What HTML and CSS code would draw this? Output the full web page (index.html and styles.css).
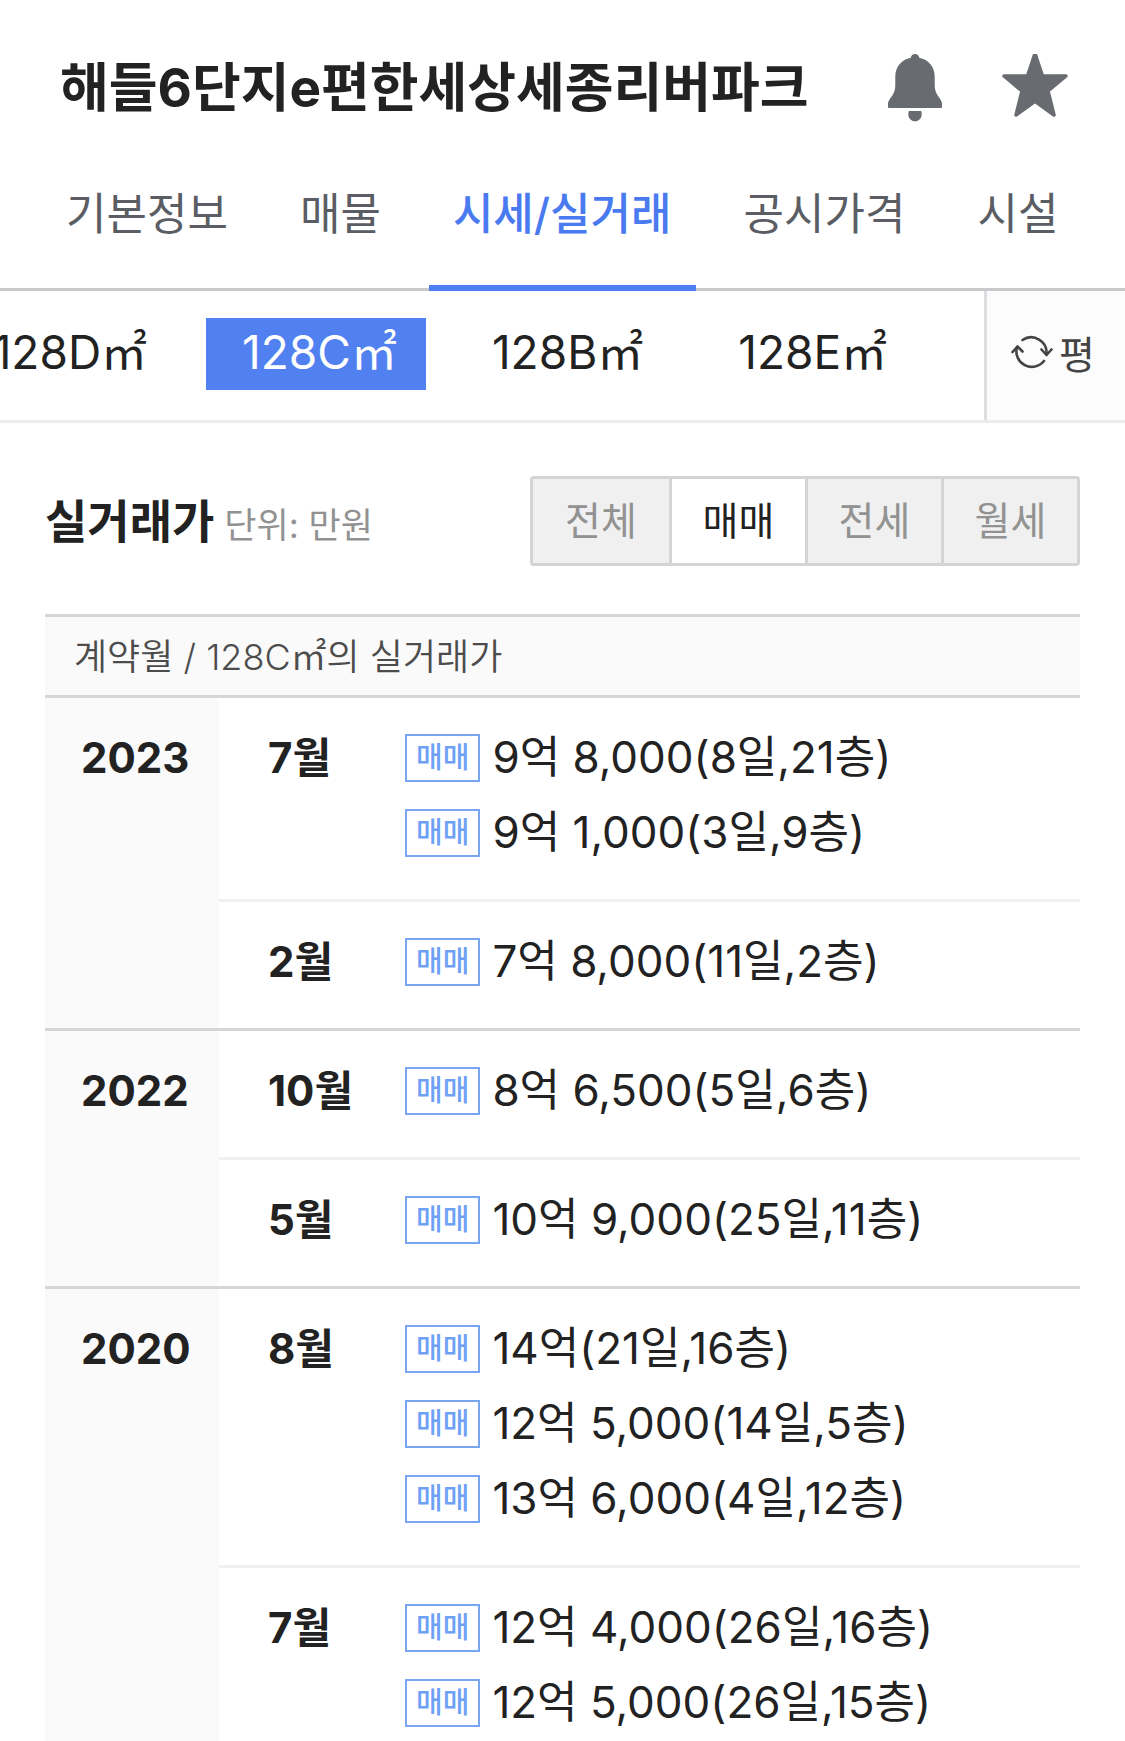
FILE: index.html
```html
<!DOCTYPE html>
<html lang="ko">
<head>
<meta charset="utf-8">
<meta name="viewport" content="width=device-width, initial-scale=1">
<title>해들6단지e편한세상세종리버파크</title>
<link rel="stylesheet" href="styles.css">
</head>
<body>
<div class="app">
  <header class="header">
    <h1 class="header-title">해들6단지e편한세상세종리버파크</h1>
    <button class="icon-button" type="button" aria-label="알림">
      <svg width="54" height="68" viewBox="0 0 54 68" fill="currentColor" aria-hidden="true">
        <path d="M27 0c-2.300 0-3.900 1.500-4.200 3.700C13.500 5.500 7.300 12.800 7.300 22.500V31c0 4.200-.8 7.300-3 10.500l-2.300 3.300C.7 46.800 0 48.300 0 50v2.800C0 53.600.5 54 1.200 54h51.600c.7 0 1.200-.4 1.200-1.200V50c0-1.700-.7-3.200-2-5.200l-2.300-3.300c-2.200-3.200-3-6.300-3-10.500v-8.500c0-9.700-6.200-17-15.500-18.800C30.900 1.500 29.300 0 27 0z"/>
        <path d="M20.800 57h12.400c.3.900.5 1.900.5 3 0 4.200-2.800 7.300-6.700 7.300s-6.700-3.100-6.700-7.300c0-1.100.2-2.100.5-3z"/>
      </svg>
    </button>
    <button class="icon-button" type="button" aria-label="관심 단지">
      <svg width="66" height="68" viewBox="0 4 66 68" aria-hidden="true">
        <path d="M33 3.500L40.500 26H64L46 41 52 65 33 51.300 14 65 20 41 2 26h23.500z" fill="currentColor" stroke="currentColor" stroke-width="3.500" stroke-linejoin="round"/>
      </svg>
    </button>
  </header>

  <nav class="tabs" aria-label="단지 메뉴">
    <a class="tab" href="#info">기본정보</a>
    <a class="tab" href="#articles">매물</a>
    <a class="tab tab-active" href="#price" aria-current="page">시세/실거래</a>
    <a class="tab" href="#official">공시가격</a>
    <a class="tab" href="#facility">시설</a>
  </nav>

  <div class="areas">
    <div class="area-list">
      <button class="area" type="button">128D㎡</button>
      <button class="area area-active" type="button" aria-pressed="true">128C㎡</button>
      <button class="area" type="button">128B㎡</button>
      <button class="area" type="button">128E㎡</button>
    </div>
    <button class="unit-button" type="button">
      <svg width="42" height="36" viewBox="0 0 42 36" fill="none" stroke="currentColor" stroke-width="2.600" stroke-linecap="round" stroke-linejoin="round" aria-hidden="true">
        <path d="M11.500 6A15.500 15.500 0 0 1 35.500 20.500"/>
        <path d="M30.500 15.500l5 5.500 5-5.500"/>
        <path d="M33 27A15.500 15.500 0 0 1 6 13"/>
        <path d="M1.500 18l5-5.500 5 5"/>
      </svg>
      평
    </button>
  </div>

  <main class="deals" id="price">
    <div class="deals-head">
      <h2 class="deals-title">실거래가</h2>
      <span class="deals-unit">단위: 만원</span>
      <div class="segment" role="group" aria-label="거래 유형">
        <button class="segment-item" type="button">전체</button>
        <button class="segment-item segment-active" type="button" aria-pressed="true">매매</button>
        <button class="segment-item" type="button">전세</button>
        <button class="segment-item" type="button">월세</button>
      </div>
    </div>

    <table class="table">
      <colgroup><col class="col-year"><col class="col-month"><col></colgroup>
      <thead>
        <tr><th class="table-caption" colspan="3" scope="colgroup">계약월 / 128C㎡의 실거래가</th></tr>
      </thead>
      <tbody>
        <tr class="year-start">
          <th class="year" rowspan="2" scope="rowgroup">2023</th>
          <th class="month" scope="row">7월</th>
          <td class="prices">
            <div class="deal"><span class="badge">매매</span>9억 8,000(8일,21층)</div>
            <div class="deal"><span class="badge">매매</span>9억 1,000(3일,9층)</div>
          </td>
        </tr>
        <tr>
          <th class="month" scope="row">2월</th>
          <td class="prices">
            <div class="deal"><span class="badge">매매</span>7억 8,000(11일,2층)</div>
          </td>
        </tr>
      </tbody>
      <tbody>
        <tr class="year-start">
          <th class="year" rowspan="2" scope="rowgroup">2022</th>
          <th class="month" scope="row">10월</th>
          <td class="prices">
            <div class="deal"><span class="badge">매매</span>8억 6,500(5일,6층)</div>
          </td>
        </tr>
        <tr>
          <th class="month" scope="row">5월</th>
          <td class="prices">
            <div class="deal"><span class="badge">매매</span>10억 9,000(25일,11층)</div>
          </td>
        </tr>
      </tbody>
      <tbody>
        <tr class="year-start">
          <th class="year" rowspan="2" scope="rowgroup">2020</th>
          <th class="month" scope="row">8월</th>
          <td class="prices">
            <div class="deal"><span class="badge">매매</span>14억(21일,16층)</div>
            <div class="deal"><span class="badge">매매</span>12억 5,000(14일,5층)</div>
            <div class="deal"><span class="badge">매매</span>13억 6,000(4일,12층)</div>
          </td>
        </tr>
        <tr>
          <th class="month" scope="row">7월</th>
          <td class="prices">
            <div class="deal"><span class="badge">매매</span>12억 4,000(26일,16층)</div>
            <div class="deal"><span class="badge">매매</span>12억 5,000(26일,15층)</div>
          </td>
        </tr>
      </tbody>
    </table>
  </main>
</div>
</body>
</html>
```

FILE: styles.css
```css
* {
  box-sizing: border-box;
}

body {
  margin: 0;
  background: #fff;
  color: #222;
  font-family: Inter, "Noto Sans CJK KR", sans-serif;
}

button {
  margin: 0;
  padding: 0;
  border: 0;
  background: none;
  color: inherit;
  font: inherit;
  cursor: pointer;
}

.app {
  height: 100vh;
  overflow: hidden;
}

/* Header */
.header {
  display: flex;
  align-items: center;
  padding: 46px 57px 0 60px;
}

.header-title {
  flex: 1;
  margin: 0;
  font-size: 53px;
  font-weight: 700;
  line-height: 84px;
  white-space: nowrap;
}

.icon-button {
  display: flex;
  margin-left: 60px;
  color: #686b70;
}

/* Tabs */
.tabs {
  display: flex;
  gap: 24px;
  padding: 0 42px;
  box-shadow: inset 0 -3px #cacace;
}

.tab {
  padding: 49px 24px 36px;
  border-bottom: 6px solid transparent;
  color: #5a5d63;
  font-size: 44px;
  line-height: 70px;
  text-decoration: none;
  white-space: nowrap;
}

.tab-active {
  border-color: #4f7ff0;
  color: #4a7af0;
  font-weight: 500;
}

/* Area filter */
.areas {
  display: flex;
  border-bottom: 3px solid #ececec;
}

.area-list {
  flex: 1;
  display: flex;
  justify-content: flex-end;
  gap: 30px;
  padding: 27px 68px 30px 0;
  overflow: hidden;
}

.area {
  flex: none;
  padding: 0 29px 4px 36px;
  font-size: 46px;
  line-height: 68px;
  white-space: nowrap;
}

.area-active {
  background: #5181f0;
  color: #fff;
}

.unit-button {
  display: flex;
  align-items: center;
  gap: 6px;
  padding: 0 30px 8px 24px;
  border-left: 3px solid #dedee0;
  background: #fcfcfc;
  color: #444;
  font-size: 39px;
}

/* Deals */
.deals {
  padding: 53px 45px 0;
}

.deals-head {
  display: flex;
  align-items: center;
  gap: 10px;
}

.deals-title {
  margin: 0;
  font-size: 46px;
  font-weight: 700;
  line-height: 60px;
}

.deals-unit {
  padding-top: 8px;
  color: #929292;
  font-size: 35px;
  line-height: 60px;
}

.segment {
  display: flex;
  margin-left: auto;
  border: 3px solid #d4d4d4;
  border-radius: 4px;
}

.segment-item {
  width: 136px;
  background: #f0f0f0;
  color: #929292;
  font-size: 39px;
  line-height: 84px;
}

.segment-item + .segment-item {
  border-left: 3px solid #d4d4d4;
}

.segment-item.segment-active {
  background: #fff;
  color: #222;
}

/* Deal table */
.table {
  width: 100%;
  margin-top: 48px;
  border-spacing: 0;
  table-layout: fixed;
}

.col-year {
  width: 174px;
}

.col-month {
  width: 186px;
}

.table th {
  text-align: left;
  vertical-align: top;
}

.table .table-caption {
  padding: 2px 29px 0;
  border-top: 3px solid #d6d6d6;
  background: #fafafa;
  color: #4c4c4c;
  font-size: 36px;
  font-weight: 350;
  line-height: 76px;
}

.year,
.month,
.prices {
  padding: 22px 0 29px;
  border-top: 3px solid #f0f0f0;
  line-height: 75px;
}

.year-start > * {
  border-top-color: #d6d6d6;
}

.table .year {
  padding-left: 36px;
  background: #fafafa;
  font-size: 42px;
}

.month {
  padding-left: 49px;
  font-size: 42px;
}

.prices {
  font-size: 44px;
}

.deal {
  display: flex;
  align-items: center;
  gap: 12px;
  white-space: nowrap;
}

.badge {
  padding: 0 9px;
  border: 2px solid #78a6f3;
  color: #6ea1f5;
  font-size: 29px;
  font-weight: 500;
  line-height: 44px;
}
```
